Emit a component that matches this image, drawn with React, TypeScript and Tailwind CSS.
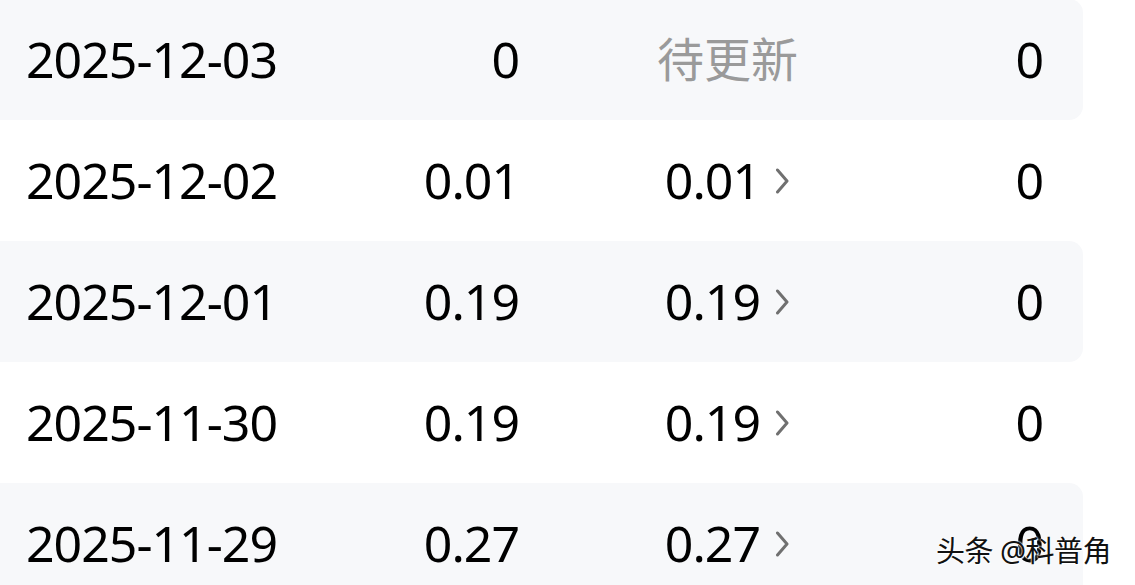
import { Fragment } from 'react';

type Row = { date: string; a: string; b: string | null; c: string; shaded: boolean };

const rows: Row[] = [
  { date: '2025-12-03', a: '0', b: null, c: '0', shaded: true },
  { date: '2025-12-02', a: '0.01', b: '0.01', c: '0', shaded: false },
  { date: '2025-12-01', a: '0.19', b: '0.19', c: '0', shaded: true },
  { date: '2025-11-30', a: '0.19', b: '0.19', c: '0', shaded: false },
  { date: '2025-11-29', a: '0.27', b: '0.27', c: '0', shaded: true },
];

function Chevron() {
  return (
    <svg width="14" height="26" viewBox="0 0 14 26" className="ml-[15px] mr-[9px]">
      <path d="M2.5 2 L12 13 L2.5 24" fill="none" stroke="#707070" strokeWidth="3" strokeLinecap="round" strokeLinejoin="round" />
    </svg>
  );
}

export default function App() {
  return (
    <div className="relative w-[1135px] h-[585px] overflow-hidden bg-white font-['Noto_Sans','Noto_Sans_CJK_SC',sans-serif] text-black">
      <div className="-mt-px flex flex-col">
        {rows.map((r, i) => (
          <Fragment key={i}>
            <div
              className={`flex h-[121px] w-[1083px] items-center rounded-r-[14px] text-[50px] font-[370] tracking-[-1px] ${
                r.shaded ? 'bg-[#f7f8fa]' : 'bg-white'
              }`}
            >
              <div className="w-[400px] pl-[26px]">{r.date}</div>
              <div className="w-[119px] text-right">{r.a}</div>
              <div className="flex w-[279px] items-center justify-end">
                {r.b === null ? (
                  <span className="text-[47px] font-normal tracking-normal text-[#9a9a9a]">待更新</span>
                ) : (
                  <>
                    <span>{r.b}</span>
                    <Chevron />
                  </>
                )}
              </div>
              <div className="w-[245px] text-right">{r.c}</div>
            </div>
          </Fragment>
        ))}
      </div>
      <div className="absolute left-[936px] top-[536px] text-[29px] leading-none tracking-[-0.5px] text-[#111] [text-shadow:0_0_2px_#fff,0_0_2px_#fff,1px_1px_1px_#fff]">
        头条 @科普角
      </div>
    </div>
  );
}
